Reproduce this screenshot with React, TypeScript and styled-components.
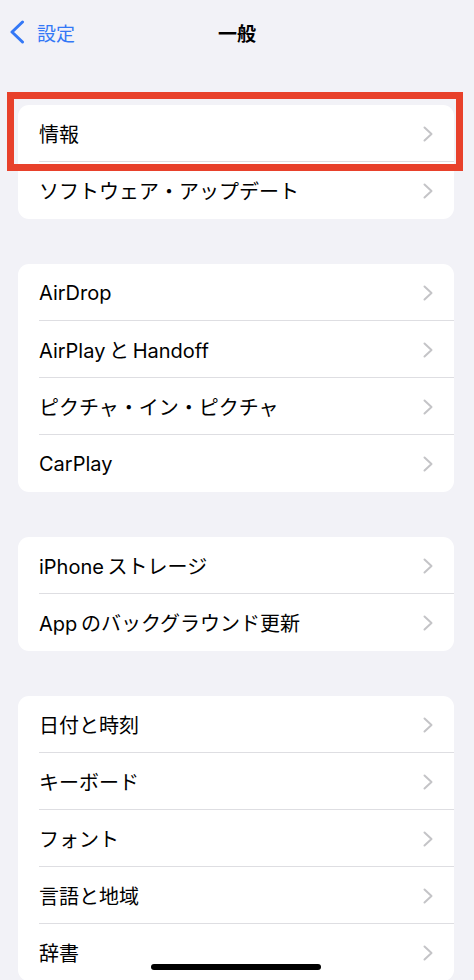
import styled, { createGlobalStyle } from 'styled-components';

const GlobalStyle = createGlobalStyle`
  html, body {
    margin: 0;
    padding: 0;
    background: #f2f2f7;
  }
  body {
    font-family: Inter, 'Noto Sans CJK JP', sans-serif;
    -webkit-font-smoothing: antialiased;
  }
`;

const Page = styled.div`
  min-height: 980px;
  background: #f2f2f7;
  position: relative;
  overflow: hidden;
`;

const NavBar = styled.header`
  height: 64px;
  display: grid;
  grid-template-columns: 1fr auto 1fr;
  align-items: center;
`;

const BackButton = styled.button`
  display: flex;
  align-items: center;
  gap: 12px;
  padding: 0 0 0 9px;
  border: none;
  background: none;
  color: #3478f6;
  font-family: inherit;
  font-size: 19px;
  justify-self: start;
  svg {
    display: block;
  }
`;

const Title = styled.h1`
  margin: 0;
  font-size: 19px;
  font-weight: 600;
  color: #000;
`;

const Sections = styled.main`
  padding-top: 41px;
  display: flex;
  flex-direction: column;
  gap: 45px;
`;

const Card = styled.section`
  position: relative;
  margin: 0 20px 0 18px;
  background: #fff;
  border-radius: 11px;
`;

const Row = styled.div<{ $last?: boolean }>`
  position: relative;
  height: 57px;
  display: flex;
  align-items: center;
  padding: 0 21px 0 21px;
  font-size: 20px;
  color: #000;
  &::after {
    content: '';
    display: ${(p) => (p.$last ? 'none' : 'block')};
    position: absolute;
    left: 21px;
    right: 0;
    bottom: 0;
    height: 1px;
    background: #dedee2;
  }
`;

const Label = styled.span`
  flex: 1;
`;

const Highlight = styled.div`
  position: absolute;
  left: -11px;
  right: -9px;
  top: -13px;
  height: 79px;
  box-sizing: border-box;
  border: 7px solid #e8412b;
  pointer-events: none;
`;

const HomeIndicator = styled.div`
  position: absolute;
  left: 151px;
  bottom: 11px;
  width: 170px;
  height: 6px;
  border-radius: 3px;
  background: #000;
`;

function Chevron() {
  return (
    <svg width="10" height="16" viewBox="0 0 10 16">
      <polyline
        points="1.5,1.5 8.5,8 1.5,14.5"
        fill="none"
        stroke="#c4c4c7"
        strokeWidth="2"
        strokeLinecap="round"
        strokeLinejoin="round"
      />
    </svg>
  );
}

const sections: string[][] = [
  ['情報', 'ソフトウェア・アップデート'],
  ['AirDrop', 'AirPlay\u2009と\u2009Handoff', 'ピクチャ・イン・ピクチャ', 'CarPlay'],
  ['iPhone\u2009ストレージ', 'App\u2009のバックグラウンド更新'],
  ['日付と時刻', 'キーボード', 'フォント', '言語と地域', '辞書'],
];

export default function App() {
  return (
    <Page>
      <GlobalStyle />
      <NavBar>
        <BackButton type="button">
          <svg width="16" height="24" viewBox="0 0 16 24">
            <polyline
              points="13.5,2 3,12 13.5,22"
              fill="none"
              stroke="#3478f6"
              strokeWidth="3"
              strokeLinecap="round"
              strokeLinejoin="round"
            />
          </svg>
          設定
        </BackButton>
        <Title>一般</Title>
        <span />
      </NavBar>
      <Sections>
        {sections.map((rows, si) => (
          <Card key={si}>
            {si === 0 && <Highlight />}
            {rows.map((label, ri) => (
              <Row key={label} $last={ri === rows.length - 1}>
                <Label>{label}</Label>
                <Chevron />
              </Row>
            ))}
          </Card>
        ))}
      </Sections>
      <HomeIndicator />
    </Page>
  );
}
